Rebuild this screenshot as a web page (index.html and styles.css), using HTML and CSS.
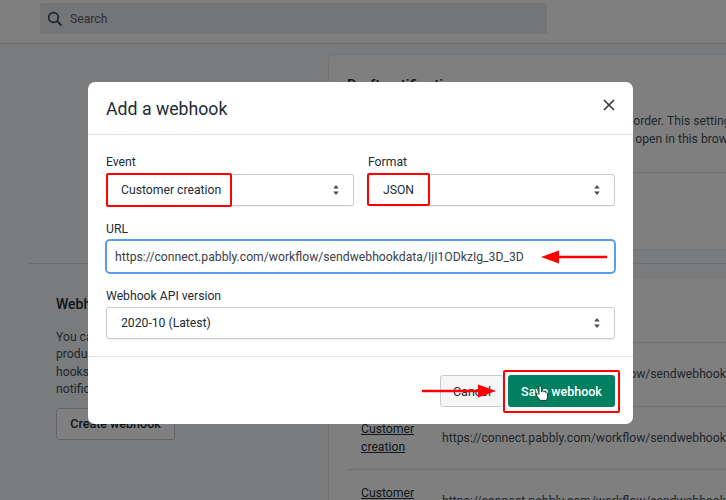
FILE: index.html
```html
<!DOCTYPE html>
<html lang="en">
<head>
<meta charset="utf-8">
<title>Add a webhook</title>
<link rel="stylesheet" href="styles.css">
</head>
<body>
<header class="topbar">
  <div class="search">
    <svg class="search-icon" viewBox="0 0 16 16" width="16" height="16"><circle cx="6.5" cy="6.5" r="4.8" fill="none" stroke="currentColor" stroke-width="1.7"/><path d="M10 10l4.6 4.6" stroke="currentColor" stroke-width="1.9" fill="none"/></svg>
    <span>Search</span>
  </div>
</header>
<main class="page">
  <section class="intro">
    <div class="intro-inner">
      <h2>Webhooks</h2>
      <p>You can send notifications about<br>products and orders to URLs using<br>hooks when events occur in your<br>notifications to you.</p>
      <button class="plain-btn" type="button">Create webhook</button>
    </div>
  </section>
  <section class="cards">
    <div class="card card-top">
      <h3>Draft notifications</h3>
      <p>Notifications were always sent to you in your chosen order. This setting only applies<br>Draft notifications will only apply to the windows that open in this browser.</p>
      <div class="card-rule"></div>
    </div>
    <div class="section-rule"></div>
    <div class="card card-list">
      <div class="row"><span class="row-name"></span><span class="row-url">https://connect.pabbly.com/workflow/sendwebhook</span></div>
      <div class="row"><a class="row-name">Customer creation</a><span class="row-url">https://connect.pabbly.com/workflow/sendwebhook</span></div>
      <div class="row"><a class="row-name">Customer creation</a><span class="row-url">https://connect.pabbly.com/workflow/sendwebhook</span></div>
    </div>
  </section>
</main>
<div class="backdrop">
  <div class="modal">
    <div class="modal-head">
      <h1>Add a webhook</h1>
      <svg class="close" viewBox="0 0 12 12" width="12" height="12"><path d="M1 1l10 10M11 1L1 11" stroke="#3a3f45" stroke-width="1.7" fill="none"/></svg>
    </div>
    <div class="modal-body">
      <div class="two">
        <div class="field">
          <label>Event</label>
          <div class="select"><span>Customer creation</span><svg class="updown" viewBox="0 0 6 10" width="6" height="10"><path d="M3 0l2.8 3.6H.2zM3 10L.2 6.4h5.6z" fill="#454f5b"/></svg></div>
        </div>
        <div class="field">
          <label>Format</label>
          <div class="select"><span>JSON</span><svg class="updown" viewBox="0 0 6 10" width="6" height="10"><path d="M3 0l2.8 3.6H.2zM3 10L.2 6.4h5.6z" fill="#454f5b"/></svg></div>
        </div>
      </div>
      <div class="field field-url">
        <label>URL</label>
        <div class="url-input">https://connect.pabbly.com/workflow/sendwebhookdata/IjI1ODkzIg_3D_3D</div>
      </div>
      <div class="field field-api">
        <label>Webhook API version</label>
        <div class="select"><span>2020-10 (Latest)</span><svg class="updown" viewBox="0 0 6 10" width="6" height="10"><path d="M3 0l2.8 3.6H.2zM3 10L.2 6.4h5.6z" fill="#454f5b"/></svg></div>
      </div>
    </div>
    <div class="modal-foot">
      <button class="cancel" type="button">Cancel</button>
      <button class="save" type="button">Save webhook</button>
    </div>
    <i class="mark mark-event"></i>
    <i class="mark mark-format"></i>
    <i class="mark mark-save"></i>
    <svg class="arrow arrow-url" viewBox="0 0 66 14" width="66" height="14"><path d="M66 7H16" stroke="#f00" stroke-width="2.4"/><path d="M0 7l18-6.5v13z" fill="#f00"/></svg>
    <svg class="arrow arrow-cancel" viewBox="0 0 74 14" width="74" height="14"><path d="M0 7h58" stroke="#f00" stroke-width="2.4"/><path d="M74 7L56 .5v13z" fill="#f00"/></svg>
    <svg class="cursor" viewBox="0 0 14 18" width="14" height="18"><path d="M4 9V2.2a1.2 1.2 0 0 1 2.4 0V7l.2-.6a1.1 1.1 0 0 1 2 .2l.1.4a1.1 1.1 0 0 1 1.9.3l.1.4a1 1 0 0 1 1.8.5v3.6c0 1.6-.6 2.6-1 3.6H5.6C4.6 14.4 3 12.6 1.6 10.8.8 9.6 2 8.4 3 9.2z" fill="#fff" stroke="#222" stroke-width=".9" stroke-linejoin="round"/></svg>
  </div>
</div>
</body>
</html>
```
FILE: styles.css
```css
* { box-sizing: border-box; }
html, body { margin: 0; height: 500px; overflow: hidden; }
body {
  background: #f4f6f8;
  color: #212b36;
  font-family: Roboto, "Noto Sans", sans-serif;
  font-size: 12.2px;
}
.topbar {
  height: 44px;
  background: #fff;
  border-bottom: 1px solid #d4d6da;
  padding: 3px 179px 0 40px;
}
.search {
  height: 31px;
  background: #e9eaee;
  border-radius: 3px;
  display: flex;
  align-items: center;
  gap: 7px;
  padding-left: 7px;
  color: #5c6168;
}
.search-icon { color: #454a50; }
.page {
  display: grid;
  grid-template-columns: 329px 397px;
  height: 456px;
  overflow: hidden;
}
.intro { padding: 219px 0 0 28px; }
.intro-inner {
  border-top: 1px solid #d9dce0;
  padding: 31px 0 0 28px;
}
.intro h2 { margin: 0 0 16px; font-size: 14px; font-weight: 500; line-height: 18px; }
.intro p { margin: 0 0 9px; line-height: 17.4px; color: #454f5b; white-space: nowrap; }
.plain-btn {
  width: 119px;
  height: 32px;
  border: 1px solid #c4cdd5;
  border-radius: 3px;
  background: #fff;
  color: #212b36;
  font: 500 12.5px Roboto, sans-serif;
}
.cards { padding-top: 11px; }
.card {
  background: #fff;
  border-radius: 5px 0 0 5px;
  box-shadow: 0 0 2px rgba(23, 24, 24, .2);
  white-space: nowrap;
  overflow: hidden;
}
.card-top { height: 194px; padding: 20px 0 0 18px; }
.card-top h3 { margin: 0 0 17px; font-size: 15px; font-weight: 500; line-height: 20px; }
.card-top p { margin: 0; line-height: 18px; color: #454f5b; }
.card-rule { margin: 24px 0 0 -18px; border-top: 1px solid #dfe3e8; }
.section-rule { margin: 14px 0; border-top: 1px solid #d9dce0; height: 0; }
.card-list { height: 300px; padding-top: 64px; }
.row {
  height: 63.5px;
  margin-left: 19px;
  padding-left: 13px;
  border-top: 1px solid #dfe3e8;
  display: grid;
  grid-template-columns: 81px 1fr;
  align-items: center;
}
.row-name {
  white-space: normal;
  line-height: 18px;
  width: 70px;
  padding-top: 1px;
  text-decoration: underline;
  color: #212b36;
}
.row-url { color: #454f5b; }
.backdrop {
  position: fixed;
  inset: 0;
  padding: 82px 93px 76px 88px;
  background: rgba(0, 0, 0, .5);
}
.modal {
  position: relative;
  height: 342px;
  background: #fff;
  border-radius: 7px;
}
.modal-head {
  height: 53px;
  border-bottom: 1px solid #dfe3e8;
  display: flex;
  align-items: center;
  justify-content: space-between;
  padding: 0 18px;
}
.modal-head h1 { margin: 2px 0 0; font-size: 17.7px; font-weight: 400; color: #212b36; }
.close { margin: 0 0 6px; }
.modal-body { padding: 19px 18px 0; height: 222px; border-bottom: 1px solid #dfe3e8; }
.two { display: grid; grid-template-columns: 248px 247px; gap: 14px; }
.field label { display: block; line-height: 16px; height: 20px; color: #212b36; }
.select {
  height: 32px;
  border: 1px solid #c4cdd5;
  border-radius: 3px;
  background: #fff;
  display: flex;
  align-items: center;
  justify-content: space-between;
  padding: 0 15px 0 14px;
  box-shadow: 0 1px 0 rgba(22, 29, 37, .05);
}
.updown { margin-right: -1px; }
.field-url { margin-top: 15px; }
.field-url label { height: 18px; }
.url-input {
  margin: 0 -1px;
  height: 35px;
  border: 2px solid #5c9cf0;
  border-radius: 5px;
  padding: 0 8px;
  display: flex;
  align-items: center;
  color: #3a4149;
  white-space: nowrap;
}
.field-api { margin-top: 14px; }
.field-api label { height: 19px; }
.modal-foot {
  display: flex;
  justify-content: flex-end;
  gap: 4px;
  padding: 18px 18px 0;
}
.cancel, .save {
  height: 32px;
  border-radius: 3px;
  font: 500 12.5px Roboto, sans-serif;
}
.cancel { width: 64px; border: 1px solid #c4cdd5; background: #f6f6f7; color: #212b36; font-weight: 400; }
.save { width: 107px; border: 0; background: #008060; color: #fff; }
.mark { position: absolute; border: 2px solid #f00; border-radius: 2px; }
.mark-event { left: 18px; top: 91px; width: 126px; height: 34px; }
.mark-format { left: 279px; top: 91px; width: 63px; height: 33px; }
.mark-save { left: 415px; top: 288px; width: 117px; height: 43px; }
.arrow { position: absolute; }
.arrow-url { left: 453px; top: 168px; }
.arrow-cancel { left: 334px; top: 302px; }
.cursor { position: absolute; left: 447px; top: 303px; }
```
